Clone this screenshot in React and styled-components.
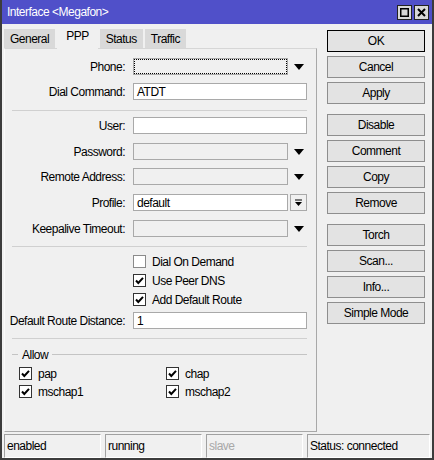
import React from 'react';
import styled, { createGlobalStyle } from 'styled-components';

const GlobalStyle = createGlobalStyle`
  * { box-sizing: border-box; }
  body {
    margin: 0;
    background: #f0f0f0;
    font-family: "Liberation Sans", Arial, sans-serif;
    font-size: 12px;
    letter-spacing: -0.5px;
    color: #000;
  }
`;

const Window = styled.div`
  width: 434px;
  height: 460px;
  display: flex;
  flex-direction: column;
  background: #f0f0f0;
  border: 2px solid #3c3c3c;
  border-top: none;
`;

const TitleBar = styled.div`
  height: 24px;
  flex-shrink: 0;
  display: flex;
  align-items: center;
  justify-content: space-between;
  padding: 0 3px 0 5px;
  background: #5050c9;
  color: #fff;
`;

const TitleButtons = styled.div`
  display: flex;
  gap: 2px;
`;

const TitleButton = styled.div`
  width: 15px;
  height: 15px;
  background: #d8d8d8;
  border: 1px solid #222;
  display: flex;
  align-items: center;
  justify-content: center;
`;

const Body = styled.div`
  flex: 1;
  display: flex;
  gap: 10px;
  padding-left: 2px;
`;

const LeftColumn = styled.div`
  width: 313px;
  margin-top: 3px;
  display: flex;
  flex-direction: column;
`;

const TabStrip = styled.div`
  height: 21px;
  display: flex;
  align-items: flex-end;
  gap: 2px;
  position: relative;
  z-index: 1;
`;

const Tab = styled.div`
  height: ${(p) => (p.$active ? '22px' : '19px')};
  margin-bottom: ${(p) => (p.$active ? '-1px' : '0')};
  padding: ${(p) => (p.$active ? '2px 9px 0' : '3px 6px 0')};
  background: ${(p) => (p.$active ? '#f0f0f0' : '#d9d9d9')};
`;

const Panel = styled.div`
  height: 384px;
  border-top: 1px solid #d6d6d6;
  border-left: 1px solid #fafafa;
  border-right: 1px solid #a8a8a8;
  border-bottom: 1px solid #a8a8a8;
  padding: 9px 9px 0 0;
  display: flex;
  flex-direction: column;
`;

const Row = styled.div`
  display: flex;
  align-items: center;
  height: 17px;
  margin-top: ${(p) => p.$mt || 0}px;
`;

const Label = styled.div`
  width: 121px;
  padding-right: 1px;
  text-align: right;
  margin-right: 7px;
  white-space: nowrap;
`;

const Input = styled.div`
  flex: 1;
  height: 17px;
  border: 1px solid #a9a9a9;
  background: ${(p) => (p.$disabled ? '#f0f0f0' : '#fff')};
  padding: 1px 3px 0;
  outline: ${(p) => (p.$focus ? '1px dotted #000' : 'none')};
  outline-offset: -2px;
  line-height: 14px;
`;

const ArrowSlot = styled.div`
  width: 19px;
  height: 17px;
  display: flex;
  align-items: center;
  justify-content: center;
  padding-left: 3px;
`;

const SmallButton = styled.div`
  width: 17px;
  height: 17px;
  margin-left: 2px;
  border: 1px solid #a9a9a9;
  background: #f0f0f0;
  display: flex;
  align-items: center;
  justify-content: center;
`;

const Separator = styled.div`
  height: 1px;
  margin: ${(p) => p.$mt}px 0 0 7px;
  background: #d0d0d0;
`;

const CheckRow = styled.div`
  display: flex;
  align-items: center;
  gap: 6px;
  height: 13px;
  padding-left: ${(p) => p.$indent || 0}px;
  margin-top: ${(p) => p.$mt || 0}px;
`;

const Box = styled.div`
  width: 13px;
  height: 13px;
  flex-shrink: 0;
  background: #fff;
  border: 1px solid ${(p) => (p.$checked ? '#333' : '#8a8a8a')};
  display: flex;
  align-items: center;
  justify-content: center;
`;

const GroupHeader = styled.div`
  display: flex;
  align-items: center;
  gap: 4px;
  height: 13px;
  margin: 9px 0 0 7px;
`;

const GroupLine = styled.div`
  height: 1px;
  background: #c4c4c4;
  flex: ${(p) => (p.$grow ? 1 : 'none')};
  width: ${(p) => (p.$grow ? 'auto' : '6px')};
`;

const AllowGrid = styled.div`
  display: grid;
  grid-template-columns: 147px 1fr;
  row-gap: 5px;
  margin: 6px 0 0 14px;
`;

const ButtonColumn = styled.div`
  width: 98px;
  margin-top: 6px;
  display: flex;
  flex-direction: column;
`;

const Button = styled.div`
  height: 22px;
  margin-top: ${(p) => p.$mt || 0}px;
  border: 1px solid ${(p) => (p.$default ? '#000' : '#8e8e8e')};
  background: #e3e3e3;
  display: flex;
  align-items: center;
  justify-content: center;
`;

const StatusBar = styled.div`
  height: 24px;
  margin: 2px 0 0;
  padding: 0 2px;
  display: flex;
  gap: 4px;
  flex-shrink: 0;
`;

const StatusField = styled.div`
  width: ${(p) => (p.$grow ? 'auto' : '97px')};
  flex: ${(p) => (p.$grow ? 1 : 'none')};
  border-top: 1px solid #a0a0a0;
  border-left: 1px solid #a0a0a0;
  border-right: 1px solid #fff;
  border-bottom: 1px solid #fff;
  padding: 4px 2px 0;
  color: ${(p) => (p.$muted ? '#a8a8a8' : '#000')};
`;

const Arrow = () => (
  <svg width="10" height="6" viewBox="0 0 10 6">
    <path d="M0 0 H10 L5 6 Z" fill="#000" />
  </svg>
);

const Check = () => (
  <svg width="11" height="11" viewBox="0 0 11 11">
    <path d="M2 5.5 L4.3 8 L9 2.8" fill="none" stroke="#000" strokeWidth="2" />
  </svg>
);

const CheckBox = ({ checked, children, indent, mt }) => (
  <CheckRow $indent={indent} $mt={mt}>
    <Box $checked={checked}>{checked && <Check />}</Box>
    {children}
  </CheckRow>
);

const actions = [
  ['OK', 0],
  ['Cancel', 4],
  ['Apply', 4],
  ['Disable', 10],
  ['Comment', 4],
  ['Copy', 4],
  ['Remove', 4],
  ['Torch', 10],
  ['Scan...', 4],
  ['Info...', 4],
  ['Simple Mode', 4],
];

const App = () => {
  return (
    <>
      <GlobalStyle />
      <Window>
        <TitleBar>
          <span>Interface &lt;Megafon&gt;</span>
          <TitleButtons>
            <TitleButton>
              <svg width="9" height="9" viewBox="0 0 9 9">
                <rect x="0.75" y="0.75" width="7.5" height="7.5" fill="none" stroke="#000" strokeWidth="1.5" />
              </svg>
            </TitleButton>
            <TitleButton>
              <svg width="9" height="9" viewBox="0 0 9 9">
                <path d="M1 1 L8 8 M8 1 L1 8" stroke="#000" strokeWidth="2" />
              </svg>
            </TitleButton>
          </TitleButtons>
        </TitleBar>
        <Body>
          <LeftColumn>
            <TabStrip>
              <Tab>General</Tab>
              <Tab $active>PPP</Tab>
              <Tab>Status</Tab>
              <Tab>Traffic</Tab>
            </TabStrip>
            <Panel>
              <Row>
                <Label>Phone:</Label>
                <Input $disabled $focus />
                <ArrowSlot><Arrow /></ArrowSlot>
              </Row>
              <Row $mt={8}>
                <Label>Dial Command:</Label>
                <Input>ATDT</Input>
              </Row>
              <Separator $mt={10} />
              <Row $mt={6}>
                <Label>User:</Label>
                <Input />
              </Row>
              <Row $mt={9}>
                <Label>Password:</Label>
                <Input $disabled />
                <ArrowSlot><Arrow /></ArrowSlot>
              </Row>
              <Row $mt={8}>
                <Label>Remote Address:</Label>
                <Input $disabled />
                <ArrowSlot><Arrow /></ArrowSlot>
              </Row>
              <Row $mt={9}>
                <Label>Profile:</Label>
                <Input>default</Input>
                <SmallButton>
                  <svg width="9" height="8" viewBox="0 0 9 8">
                    <path d="M1 1 H8" stroke="#000" strokeWidth="1" />
                    <path d="M1 3 H8 L4.5 7 Z" fill="#000" />
                  </svg>
                </SmallButton>
              </Row>
              <Row $mt={9}>
                <Label>Keepalive Timeout:</Label>
                <Input $disabled />
                <ArrowSlot><Arrow /></ArrowSlot>
              </Row>
              <Separator $mt={9} />
              <CheckBox indent={128} mt={8}>Dial On Demand</CheckBox>
              <CheckBox checked indent={128} mt={6}>Use Peer DNS</CheckBox>
              <CheckBox checked indent={128} mt={6}>Add Default Route</CheckBox>
              <Row $mt={6}>
                <Label>Default Route Distance:</Label>
                <Input>1</Input>
              </Row>
              <Separator $mt={9} />
              <GroupHeader>
                <GroupLine />
                <span>Allow</span>
                <GroupLine $grow />
              </GroupHeader>
              <AllowGrid>
                <CheckBox checked>pap</CheckBox>
                <CheckBox checked>chap</CheckBox>
                <CheckBox checked>mschap1</CheckBox>
                <CheckBox checked>mschap2</CheckBox>
              </AllowGrid>
            </Panel>
          </LeftColumn>
          <ButtonColumn>
            {actions.map(([name, mt]) => (
              <Button key={name} $mt={mt} $default={name === 'OK'}>
                {name}
              </Button>
            ))}
          </ButtonColumn>
        </Body>
        <StatusBar>
          <StatusField>enabled</StatusField>
          <StatusField>running</StatusField>
          <StatusField $muted>slave</StatusField>
          <StatusField $grow>Status: connected</StatusField>
        </StatusBar>
      </Window>
    </>
  );
};

export default App;
